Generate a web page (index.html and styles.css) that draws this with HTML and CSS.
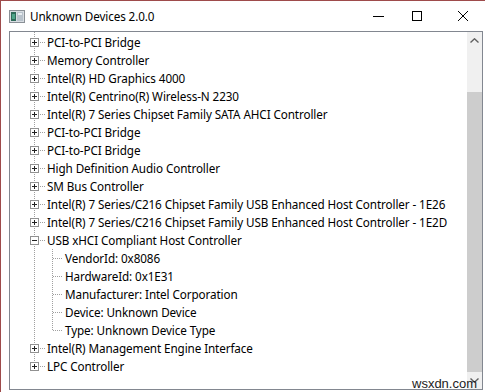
FILE: index.html
```html
<!DOCTYPE html>
<html>
<head>
<meta charset="utf-8">
<link rel="stylesheet" href="styles.css">
</head>
<body>
<div class="window">
  <div class="titlebar">
    <svg class="appicon" width="16" height="13" viewBox="0 0 16 13">
      <rect x="0.5" y="0.5" width="15" height="12" fill="#d8dde2" stroke="#8a9096"/>
      <rect x="2" y="2" width="5" height="9" fill="#2f6b5a"/>
      <rect x="3" y="4" width="3" height="5" fill="#4fa58a"/>
      <rect x="8" y="2" width="6" height="9" fill="#b9c3cc"/>
      <rect x="9" y="3" width="4" height="2" fill="#e8edf1"/>
    </svg>
    <span class="title">Unknown Devices 2.0.0</span>
    <div class="controls">
      <svg class="ctl min" width="11" height="10" viewBox="0 0 11 10"><path d="M0 5.5h11" stroke="#000" stroke-width="1"/></svg>
      <svg class="ctl max" width="10" height="10" viewBox="0 0 10 10"><rect x="0.5" y="0.5" width="9" height="9" fill="none" stroke="#000"/></svg>
      <svg class="ctl close" width="10" height="10" viewBox="0 0 10 10"><path d="M0 0L10 10M10 0L0 10" stroke="#000" stroke-width="1"/></svg>
    </div>
  </div>
  <div class="client">
    <div class="treebox">
      <div class="tree">
        <div class="node"><span class="exp"><svg width="9" height="9" viewBox="0 0 9 9"><rect x="0.5" y="0.5" width="8" height="8" fill="#fff" stroke="#919191"/><path d="M2 4.5h5M4.5 2v5" stroke="#222"/></svg></span><span class="link"></span><span class="label">PCI-to-PCI Bridge</span></div>
        <div class="node"><span class="exp"><svg width="9" height="9" viewBox="0 0 9 9"><rect x="0.5" y="0.5" width="8" height="8" fill="#fff" stroke="#919191"/><path d="M2 4.5h5M4.5 2v5" stroke="#222"/></svg></span><span class="link"></span><span class="label">Memory Controller</span></div>
        <div class="node"><span class="exp"><svg width="9" height="9" viewBox="0 0 9 9"><rect x="0.5" y="0.5" width="8" height="8" fill="#fff" stroke="#919191"/><path d="M2 4.5h5M4.5 2v5" stroke="#222"/></svg></span><span class="link"></span><span class="label">Intel(R) HD Graphics 4000</span></div>
        <div class="node"><span class="exp"><svg width="9" height="9" viewBox="0 0 9 9"><rect x="0.5" y="0.5" width="8" height="8" fill="#fff" stroke="#919191"/><path d="M2 4.5h5M4.5 2v5" stroke="#222"/></svg></span><span class="link"></span><span class="label">Intel(R) Centrino(R) Wireless-N 2230</span></div>
        <div class="node"><span class="exp"><svg width="9" height="9" viewBox="0 0 9 9"><rect x="0.5" y="0.5" width="8" height="8" fill="#fff" stroke="#919191"/><path d="M2 4.5h5M4.5 2v5" stroke="#222"/></svg></span><span class="link"></span><span class="label">Intel(R) 7 Series Chipset Family SATA AHCI Controller</span></div>
        <div class="node"><span class="exp"><svg width="9" height="9" viewBox="0 0 9 9"><rect x="0.5" y="0.5" width="8" height="8" fill="#fff" stroke="#919191"/><path d="M2 4.5h5M4.5 2v5" stroke="#222"/></svg></span><span class="link"></span><span class="label">PCI-to-PCI Bridge</span></div>
        <div class="node"><span class="exp"><svg width="9" height="9" viewBox="0 0 9 9"><rect x="0.5" y="0.5" width="8" height="8" fill="#fff" stroke="#919191"/><path d="M2 4.5h5M4.5 2v5" stroke="#222"/></svg></span><span class="link"></span><span class="label">PCI-to-PCI Bridge</span></div>
        <div class="node"><span class="exp"><svg width="9" height="9" viewBox="0 0 9 9"><rect x="0.5" y="0.5" width="8" height="8" fill="#fff" stroke="#919191"/><path d="M2 4.5h5M4.5 2v5" stroke="#222"/></svg></span><span class="link"></span><span class="label">High Definition Audio Controller</span></div>
        <div class="node"><span class="exp"><svg width="9" height="9" viewBox="0 0 9 9"><rect x="0.5" y="0.5" width="8" height="8" fill="#fff" stroke="#919191"/><path d="M2 4.5h5M4.5 2v5" stroke="#222"/></svg></span><span class="link"></span><span class="label">SM Bus Controller</span></div>
        <div class="node"><span class="exp"><svg width="9" height="9" viewBox="0 0 9 9"><rect x="0.5" y="0.5" width="8" height="8" fill="#fff" stroke="#919191"/><path d="M2 4.5h5M4.5 2v5" stroke="#222"/></svg></span><span class="link"></span><span class="label">Intel(R) 7 Series/C216 Chipset Family USB Enhanced Host Controller - 1E26</span></div>
        <div class="node"><span class="exp"><svg width="9" height="9" viewBox="0 0 9 9"><rect x="0.5" y="0.5" width="8" height="8" fill="#fff" stroke="#919191"/><path d="M2 4.5h5M4.5 2v5" stroke="#222"/></svg></span><span class="link"></span><span class="label">Intel(R) 7 Series/C216 Chipset Family USB Enhanced Host Controller - 1E2D</span></div>
        <div class="node"><span class="exp"><svg width="9" height="9" viewBox="0 0 9 9"><rect x="0.5" y="0.5" width="8" height="8" fill="#fff" stroke="#919191"/><path d="M2 4.5h5" stroke="#222"/></svg></span><span class="link"></span><span class="label">USB xHCI Compliant Host Controller</span></div>
        <div class="children">
          <div class="leaf"><span class="leaflink"></span><span class="label">VendorId: 0x8086</span></div>
          <div class="leaf"><span class="leaflink"></span><span class="label">HardwareId: 0x1E31</span></div>
          <div class="leaf"><span class="leaflink"></span><span class="label">Manufacturer: Intel Corporation</span></div>
          <div class="leaf"><span class="leaflink"></span><span class="label">Device: Unknown Device</span></div>
          <div class="leaf"><span class="leaflink"></span><span class="label">Type: Unknown Device Type</span></div>
        </div>
        <div class="node"><span class="exp"><svg width="9" height="9" viewBox="0 0 9 9"><rect x="0.5" y="0.5" width="8" height="8" fill="#fff" stroke="#919191"/><path d="M2 4.5h5M4.5 2v5" stroke="#222"/></svg></span><span class="link"></span><span class="label">Intel(R) Management Engine Interface</span></div>
        <div class="node"><span class="exp"><svg width="9" height="9" viewBox="0 0 9 9"><rect x="0.5" y="0.5" width="8" height="8" fill="#fff" stroke="#919191"/><path d="M2 4.5h5M4.5 2v5" stroke="#222"/></svg></span><span class="link"></span><span class="label">LPC Controller</span></div>
      </div>
      <div class="scrollbar">
        <div class="sbtn"><svg width="9" height="5" viewBox="0 0 9 5"><path d="M0.5 4.5L4.5 0.8L8.5 4.5" fill="none" stroke="#606060" stroke-width="1.4"/></svg></div>
        <div class="track"></div>
        <div class="thumb"></div>
        <div class="sbtn"><svg width="9" height="5" viewBox="0 0 9 5"><path d="M0.5 0.5L4.5 4.2L8.5 0.5" fill="none" stroke="#606060" stroke-width="1.4"/></svg></div>
      </div>
    </div>
  </div>
  <span class="watermark">wsxdn.com</span>
</div>
</body>
</html>
```

FILE: styles.css
```css
* { box-sizing: border-box; }
html, body { margin: 0; padding: 0; background: #fff; }
body { font-family: "Noto Sans", "Open Sans", sans-serif; font-size: 11.7px; letter-spacing: -0.1px; color: #000; }

.window {
  position: relative;
  width: 485px;
  height: 392px;
  border-top: 1px solid #9e4b4b;
  border-left: 1px solid #9e4b4b;
  background: #fff;
  display: flex;
  flex-direction: column;
  overflow: hidden;
}

.titlebar {
  height: 30px;
  flex: none;
  display: flex;
  align-items: center;
}
.appicon { margin-left: 8px; margin-top: 1px; flex: none; }
.title { margin-left: 5px; font-size: 11.7px; line-height: 16px; }
.controls { margin-left: auto; display: flex; align-items: center; padding-right: 17px; }
.ctl { display: block; flex: none; }
.min { margin-right: 28px; }
.max { margin-right: 36px; }

.client {
  flex: 1;
  display: flex;
  padding: 0 2px 2px 8px;
}
.treebox {
  flex: 1;
  display: flex;
  border: 1px solid #828790;
  background: #fff;
}
.tree {
  flex: 1;
  position: relative;
  padding-top: 1px;
  overflow: hidden;
}
.tree::before {
  content: "";
  position: absolute;
  left: 24px;
  top: 0;
  bottom: 25px;
  width: 1px;
  background-image: linear-gradient(to bottom, #a0a0a0 50%, transparent 50%);
  background-size: 1px 2px;
}
.node {
  display: flex;
  align-items: center;
  height: 18px;
  padding-left: 20px;
  white-space: nowrap;
}
.exp { position: relative; z-index: 1; width: 9px; height: 9px; flex: none; }
.exp svg { display: block; }
.link {
  width: 5px;
  height: 1px;
  margin: 0 2px 0 1px;
  flex: none;
  background-image: linear-gradient(to right, #a0a0a0 50%, transparent 50%);
  background-size: 2px 1px;
}
.label { line-height: 18px; }

.children { position: relative; }
.children::before {
  content: "";
  position: absolute;
  left: 42px;
  top: 0;
  bottom: 9px;
  width: 1px;
  background-image: linear-gradient(to bottom, #a0a0a0 50%, transparent 50%);
  background-size: 1px 2px;
}
.leaf {
  display: flex;
  align-items: center;
  height: 18px;
  padding-left: 43px;
  white-space: nowrap;
}
.leaflink {
  width: 9px;
  height: 1px;
  margin-right: 3px;
  flex: none;
  background-image: linear-gradient(to right, #a0a0a0 50%, transparent 50%);
  background-size: 2px 1px;
}

.scrollbar {
  width: 15px;
  flex: none;
  display: flex;
  flex-direction: column;
  background: #f0f0f0;
}
.sbtn { height: 17px; flex: none; display: flex; align-items: center; justify-content: center; }
.track { height: 43px; flex: none; }
.thumb { flex: 1; background: #cdcdcd; }

.watermark {
  position: absolute;
  left: 411px;
  top: 375px;
  font-family: "Liberation Sans", Arial, sans-serif;
  font-size: 13px;
  letter-spacing: 0;
  color: #222;
  line-height: 15px;
}
```
